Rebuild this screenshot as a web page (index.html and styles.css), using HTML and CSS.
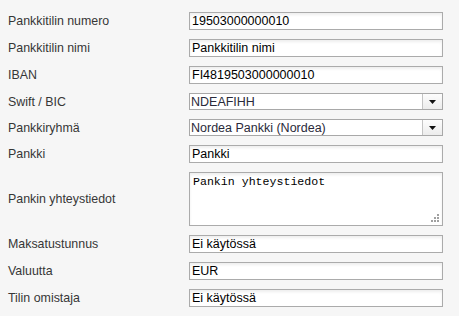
FILE: index.html
```html
<!DOCTYPE html>
<html lang="fi">
<head>
  <meta charset="UTF-8" />
  <title>Pankkitili</title>
  <link rel="stylesheet" href="styles.css">
</head>
<body>
  <form class="account-form">
    <label class="field-label" for="f-number">Pankkitilin numero</label>
    <input class="field-input" id="f-number" type="text" value="19503000000010">

    <label class="field-label" for="f-name">Pankkitilin nimi</label>
    <input class="field-input" id="f-name" type="text" value="Pankkitilin nimi">

    <label class="field-label" for="f-iban">IBAN</label>
    <input class="field-input" id="f-iban" type="text" value="FI4819503000000010">

    <label class="field-label" for="f-bic">Swift / BIC</label>
    <div class="combo">
      <select class="combo-value" id="f-bic">
        <option>NDEAFIHH</option>
      </select>
      <span class="combo-btn">
        <svg width="7" height="4" viewBox="0 0 7 4"><path d="M0 0h7L3.5 4z" fill="#111"/></svg>
      </span>
    </div>

    <label class="field-label" for="f-group">Pankkiryhmä</label>
    <div class="combo">
      <select class="combo-value" id="f-group">
        <option>Nordea Pankki (Nordea)</option>
      </select>
      <span class="combo-btn">
        <svg width="7" height="4" viewBox="0 0 7 4"><path d="M0 0h7L3.5 4z" fill="#111"/></svg>
      </span>
    </div>

    <label class="field-label" for="f-bank">Pankki</label>
    <input class="field-input" id="f-bank" type="text" value="Pankki">

    <label class="field-label" for="f-contact">Pankin yhteystiedot</label>
    <div class="area-wrap">
      <textarea class="field-area" id="f-contact">Pankin yhteystiedot</textarea>
      <svg class="grip" width="9" height="9" viewBox="0 0 9 9">
        <rect x="6" y="0" width="2" height="2" fill="#a0a0a0"/>
        <rect x="3" y="3" width="2" height="2" fill="#a0a0a0"/>
        <rect x="6" y="3" width="2" height="2" fill="#a0a0a0"/>
        <rect x="0" y="6" width="2" height="2" fill="#a0a0a0"/>
        <rect x="3" y="6" width="2" height="2" fill="#a0a0a0"/>
        <rect x="6" y="6" width="2" height="2" fill="#a0a0a0"/>
      </svg>
    </div>

    <label class="field-label" for="f-pay">Maksatustunnus</label>
    <input class="field-input" id="f-pay" type="text" value="Ei käytössä">

    <label class="field-label" for="f-currency">Valuutta</label>
    <input class="field-input" id="f-currency" type="text" value="EUR">

    <label class="field-label" for="f-owner">Tilin omistaja</label>
    <input class="field-input" id="f-owner" type="text" value="Ei käytössä">
  </form>
</body>
</html>
```

FILE: styles.css
```css
* {
  margin: 0;
  padding: 0;
  box-sizing: border-box;
}

html, body {
  width: 100%;
  height: 100%;
  background-color: #f6f6f6;
  font-family: 'Liberation Sans', Arial, sans-serif;
  overflow: hidden;
}

.account-form {
  display: grid;
  grid-template-columns: 181px 254px;
  row-gap: 9px;
  align-items: center;
  padding: 12px 0 0 8px;
}

.field-label {
  font-size: 12.4px;
  color: #363636;
}

.field-input {
  height: 18px;
  width: 100%;
  border: 1px solid #ababab;
  background: #fff;
  box-shadow: inset 0 2px 3px rgba(0,0,0,0.07);
  padding: 0 2px;
  font-family: 'Liberation Sans', Arial, sans-serif;
  font-size: 12.5px;
  color: #000;
  outline: none;
}

.combo {
  display: flex;
  height: 17px;
  border: 1px solid #a8a8a8;
  background: #fff;
}

.combo-value {
  flex: 1;
  appearance: none;
  -webkit-appearance: none;
  border: none;
  background: transparent;
  padding: 0 1px;
  font-family: 'Liberation Sans', Arial, sans-serif;
  font-size: 12.5px;
  color: #2a2a3a;
  outline: none;
}

.combo-btn {
  width: 20px;
  border-left: 1px solid #c4c4c4;
  background: linear-gradient(#fdfdfd, #ececec);
  display: flex;
  align-items: center;
  justify-content: center;
}

.area-wrap {
  position: relative;
  height: 54px;
}

.field-area {
  width: 100%;
  height: 100%;
  border: 1px solid #ababab;
  background: #fff;
  box-shadow: inset 0 2px 3px rgba(0,0,0,0.07);
  padding: 2px 3px;
  font-family: 'Liberation Mono', 'Courier New', monospace;
  font-size: 11.6px;
  color: #000;
  resize: none;
  outline: none;
}

.grip {
  position: absolute;
  right: 3px;
  bottom: 3px;
}
```
